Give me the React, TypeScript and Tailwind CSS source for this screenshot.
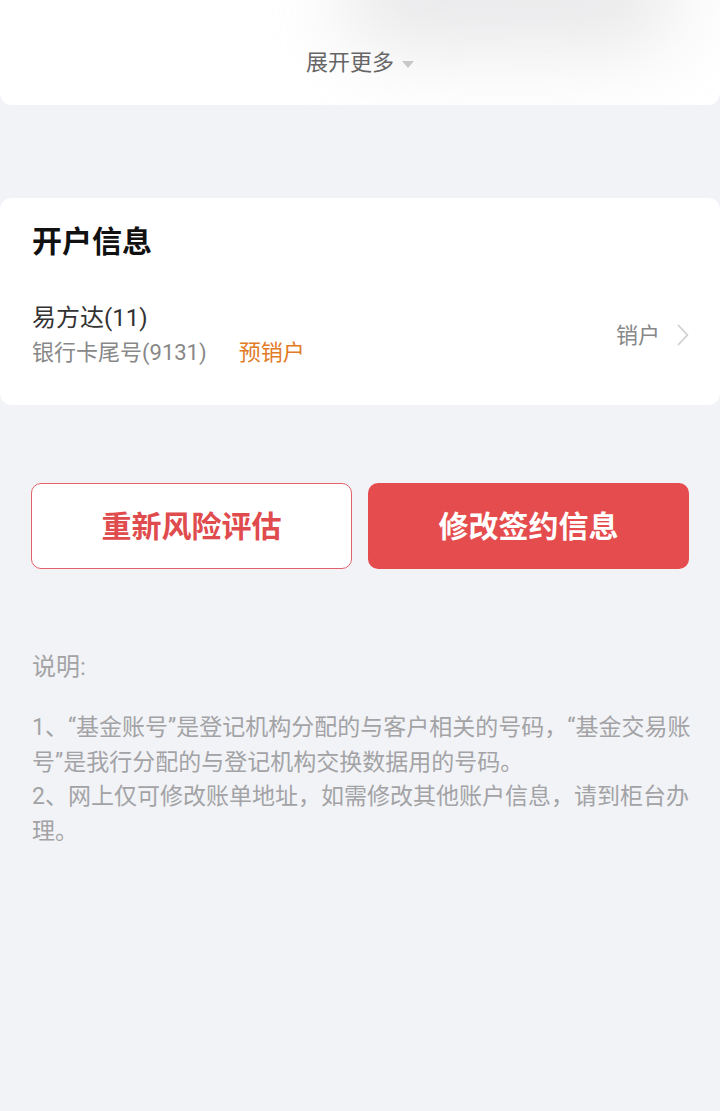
const font = { fontFamily: 'Roboto, "Noto Sans CJK SC", "Noto Sans", sans-serif' };

const notes = [
    '1、“基金账号”是登记机构分配的与客户相关的号码，“基金交易账号”是我行分配的与登记机构交换数据用的号码。',
    '2、网上仅可修改账单地址，如需修改其他账户信息，请到柜台办理。',
];

export default function App() {
    return (
        <div className="min-h-[1111px] w-full bg-[#f2f3f7]" style={font}>
            {/* top card, only its bottom part is on screen */}
            <div className="relative h-[105px] w-full overflow-hidden rounded-b-[12px] bg-white">
                <div className="pointer-events-none absolute -top-[60px] right-[40px] h-[110px] w-[340px] rounded-full bg-[#d9d9dc] opacity-60 blur-[40px]" />
                <div className="relative flex h-full items-end justify-center pb-[27px]">
                    <button className="flex items-center gap-[8px] text-[22px] leading-[30px] text-[#666]">
                        展开更多
                        <svg width="12" height="7" viewBox="0 0 12 7" className="mt-[2px]">
                            <path d="M0 0h12L6 7z" fill="#c8c8c8" />
                        </svg>
                    </button>
                </div>
            </div>

            <div className="h-[93px]" />

            {/* 开户信息 */}
            <section className="w-full rounded-[12px] bg-white px-[32px] pt-[26px] pb-[36px]">
                <h2 className="text-[30px] leading-[36px] font-bold text-[#111]">开户信息</h2>
                <div className="mt-[41px] flex items-center justify-between">
                    <div className="flex flex-col">
                        <span className="text-[24px] leading-[34px] text-[#333]">易方达(11)</span>
                        <div className="mt-[2px] flex items-center gap-[32px] text-[22px] leading-[32px]">
                            <span className="text-[#888]">银行卡尾号(9131)</span>
                            <span className="text-[#e17b26]">预销户</span>
                        </div>
                    </div>
                    <button className="-mr-[2px] flex items-center gap-[16px] text-[22px] text-[#888]">
                        销户
                        <svg width="14" height="22" viewBox="0 0 14 22" fill="none">
                            <path d="M2.5 1.5 L11.5 11 L2.5 20.5" stroke="#d0d0d2" strokeWidth="1.8" strokeLinecap="round" strokeLinejoin="round" />
                        </svg>
                    </button>
                </div>
            </section>

            {/* actions */}
            <div className="mt-[78px] grid grid-cols-2 gap-[16px] px-[31px]">
                <button className="h-[86px] rounded-[10px] border-[1.5px] border-[#e2626a] bg-white text-[30px] font-bold text-[#e04b4e]">
                    重新风险评估
                </button>
                <button className="h-[86px] rounded-[10px] bg-[#e54c4d] text-[30px] font-bold text-white">
                    修改签约信息
                </button>
            </div>

            {/* 说明 */}
            <div className="mt-[81px] pl-[32px] pr-[28px] text-[#a3a3a6]">
                <p className="text-[24px] leading-[34px]">说明:</p>
                <div className="mt-[27px] text-[23px] leading-[34.5px]">
                    {notes.map((n) => (
                        <p key={n}>{n}</p>
                    ))}
                </div>
            </div>
        </div>
    );
}
